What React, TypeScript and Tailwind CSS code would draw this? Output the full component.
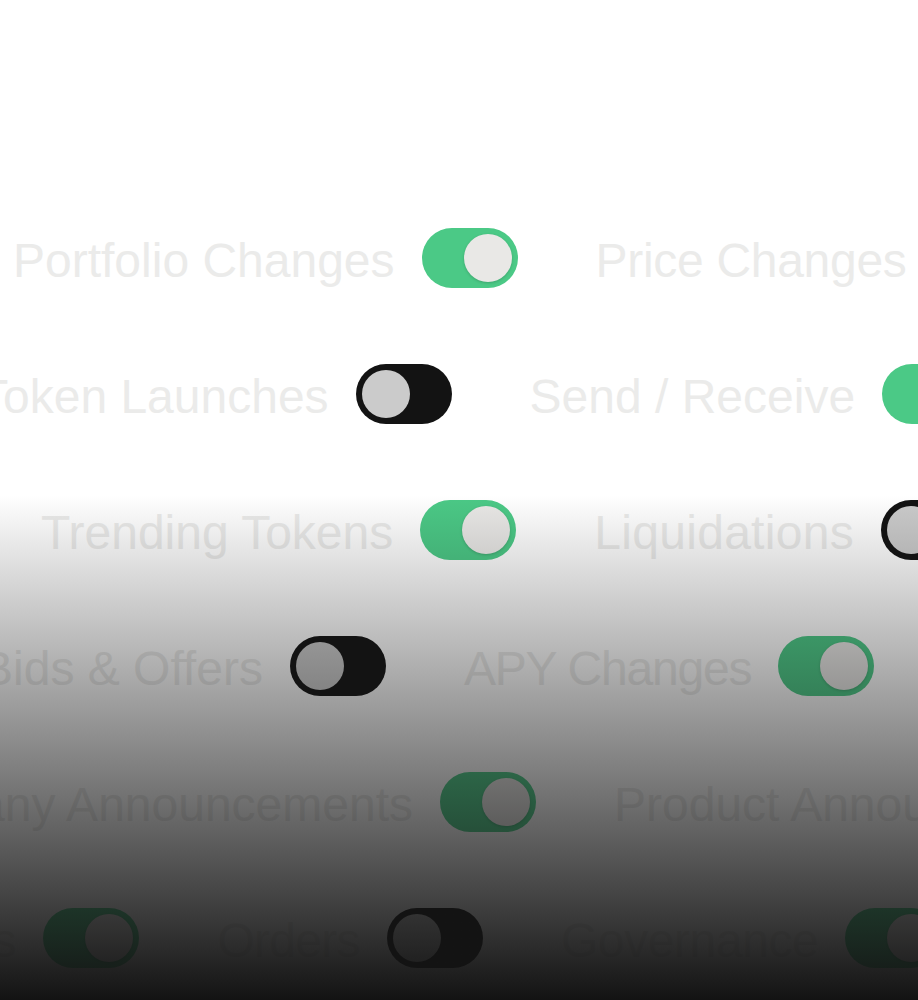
import React from 'react';

interface ToggleItem {
  label: string;
  on: boolean;
  tracking?: string;
}

interface Row {
  offset: string;
  items: ToggleItem[];
}

// Lignes de réglages, chacune décalée horizontalement
const rows: Row[] = [
  {
    offset: 'ml-[13px]',
    items: [
      { label: 'Portfolio Changes', on: true },
      { label: 'Price Changes', on: true, tracking: 'tracking-[-0.3px]' },
    ],
  },
  {
    offset: 'ml-[-21px]',
    items: [
      { label: 'Token Launches', on: false },
      { label: 'Send / Receive', on: true },
    ],
  },
  {
    offset: 'ml-[41px]',
    items: [
      { label: 'Trending Tokens', on: true },
      { label: 'Liquidations', on: false, tracking: 'tracking-[0.3px]' },
    ],
  },
  {
    offset: 'ml-[-19px]',
    items: [
      { label: 'Bids & Offers', on: false },
      { label: 'APY Changes', on: true, tracking: 'tracking-[-1.2px]' },
      { label: 'Staking', on: false },
    ],
  },
  {
    offset: 'ml-[-150px]',
    items: [
      { label: 'Company Announcements', on: true },
      { label: 'Product Announcements', on: false },
    ],
  },
  {
    offset: 'ml-[-173px]',
    items: [
      { label: 'Rewards', on: true },
      { label: 'Orders', on: false, tracking: 'tracking-[-0.7px]' },
      { label: 'Governance', on: true, tracking: 'tracking-[-0.4px]' },
    ],
  },
];

const Toggle: React.FC<{ on: boolean }> = ({ on }) => (
  <div
    className={`flex h-[60px] w-[96px] shrink-0 items-center rounded-full p-[6px] ${
      on ? 'justify-end bg-[#4bc986]' : 'justify-start bg-[#131313]'
    }`}
  >
    <div
      className={`h-[48px] w-[48px] rounded-full ${
        on ? 'bg-[#e9e8e6] shadow-[0_1px_3px_rgba(0,0,0,0.18)]' : 'bg-[#cbcbcb]'
      }`}
    />
  </div>
);

const App: React.FC = () => {
  return (
    <div className="relative h-[1000px] w-full overflow-hidden bg-white font-['Liberation_Sans',Arial,sans-serif]">
      <div className="flex flex-col gap-[76px] pt-[228px]">
        {rows.map((row, i) => (
          <div key={i} className={`flex h-[60px] items-center gap-[78px] whitespace-nowrap ${row.offset}`}>
            {row.items.map((item) => (
              <div key={item.label} className="flex shrink-0 items-center gap-[27px]">
                <span className={`pt-[6px] text-[48px] leading-none text-[#ebebea] ${item.tracking ?? ''}`}>
                  {item.label}
                </span>
                <Toggle on={item.on} />
              </div>
            ))}
          </div>
        ))}
      </div>

      {/* Dégradé sombre en bas de page */}
      <div className="pointer-events-none absolute inset-x-0 top-[495px] bottom-0 bg-gradient-to-b from-[rgba(19,19,19,0)] to-[#131313]" />
    </div>
  );
};

export default App;
